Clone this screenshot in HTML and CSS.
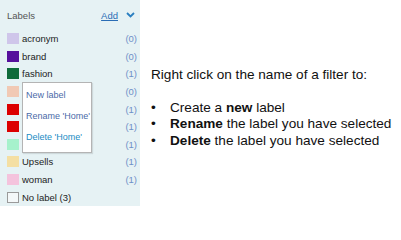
FILE: index.html
```html
<!DOCTYPE html>
<html>
<head>
<meta charset="utf-8">
<link rel="stylesheet" href="styles.css">
</head>
<body>
<div class="page">
  <div class="panel">
    <div class="header">
      <span class="title">Labels</span>
      <span class="actions"><a class="add">Add</a>
        <svg class="chev" width="9" height="6" viewBox="0 0 9 6"><path d="M1 1 L4.5 4.5 L8 1" fill="none" stroke="#2a7fc0" stroke-width="1.8"/></svg>
      </span>
    </div>
    <div class="rows">
      <div class="row"><span class="sw" style="background:#cfc6ea"></span><span class="name">acronym</span><span class="count">(0)</span></div>
      <div class="row"><span class="sw" style="background:#56109c"></span><span class="name">brand</span><span class="count">(0)</span></div>
      <div class="row"><span class="sw" style="background:#0f6b3b"></span><span class="name">fashion</span><span class="count">(1)</span></div>
      <div class="row"><span class="sw" style="background:#f1c9b4"></span><span class="name"></span><span class="count">(0)</span></div>
      <div class="row"><span class="sw" style="background:#dc0000"></span><span class="name"></span><span class="count">(1)</span></div>
      <div class="row"><span class="sw" style="background:#dc0000"></span><span class="name"></span><span class="count">(1)</span></div>
      <div class="row"><span class="sw" style="background:#a6f2cc"></span><span class="name"></span><span class="count">(1)</span></div>
      <div class="row"><span class="sw" style="background:#f4dfa3"></span><span class="name">Upsells</span><span class="count">(1)</span></div>
      <div class="row"><span class="sw" style="background:#f4c3dd"></span><span class="name">woman</span><span class="count">(1)</span></div>
      <div class="row"><span class="sw empty"></span><span class="name">No label (3)</span></div>
    </div>
    <div class="menu">
      <div class="item">New label</div>
      <div class="item">Rename 'Home'</div>
      <div class="item del">Delete 'Home'</div>
    </div>
  </div>
  <div class="help">
    <p class="lead">Right click on the name of a filter to:</p>
    <ul class="list">
      <li><span class="bul">•</span><span>Create a <b>new</b> label</span></li>
      <li><span class="bul">•</span><span><b>Rename</b> the label you have selected</span></li>
      <li><span class="bul">•</span><span><b>Delete</b> the label you have selected</span></li>
    </ul>
  </div>
</div>
</body>
</html>
```
FILE: styles.css
```css
html, body {
  margin: 0;
  padding: 0;
  background: #ffffff;
}
.page {
  display: flex;
  align-items: flex-start;
  font-family: "Liberation Sans", Arial, sans-serif;
}
.panel {
  position: relative;
  width: 140px;
  height: 206px;
  background: #e6f2f4;
  box-sizing: border-box;
  padding: 0 3px 0 7px;
  font-size: 9.5px;
}
.header {
  display: flex;
  justify-content: space-between;
  align-items: center;
  height: 30px;
}
.title {
  color: #555555;
}
.actions {
  display: flex;
  align-items: center;
  gap: 8px;
  padding-right: 2px;
}
.add {
  color: #2a6db5;
  text-decoration: underline;
}
.rows {
  display: flex;
  flex-direction: column;
}
.row {
  display: flex;
  align-items: center;
  height: 17.6px;
}
.sw {
  width: 12px;
  height: 11px;
  margin-right: 3px;
  flex: none;
  box-sizing: border-box;
}
.sw.empty {
  background: #f4f8f9;
  border: 1px solid #9a9a9a;
}
.name {
  flex: 1;
  color: #222222;
}
.count {
  color: #6f90c8;
}
.menu {
  position: absolute;
  left: 22px;
  top: 82px;
  width: 70px;
  height: 71px;
  box-sizing: border-box;
  background: #ffffff;
  border: 1px solid #b4b4b4;
  box-shadow: 1px 1px 1px rgba(0,0,0,0.1);
  padding: 6px 0 0 3px;
  display: flex;
  flex-direction: column;
  font-size: 9px;
}
.item {
  height: 22.5px;
  line-height: 12px;
  color: #4a6aa8;
}
.item.del {
  color: #1a8cc4;
}
.help {
  padding: 67px 0 0 11px;
  font-size: 13.6px;
  color: #111111;
}
.lead {
  margin: 0;
  line-height: 16.5px;
}
.list {
  list-style: none;
  margin: 16px 0 0 0;
  padding: 0;
}
.list li {
  display: flex;
  line-height: 16.5px;
}
.bul {
  width: 19px;
  flex: none;
}
```
